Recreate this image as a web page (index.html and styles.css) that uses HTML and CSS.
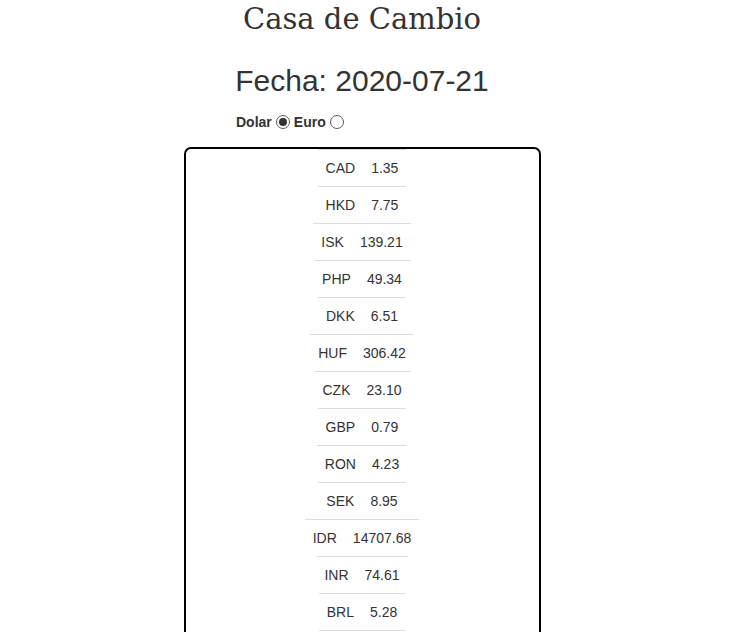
FILE: index.html
```html
<!DOCTYPE html>
<html lang="es">
<head>
<meta charset="utf-8">
<title>Casa de Cambio</title>
<link rel="stylesheet" href="styles.css">
</head>
<body>
<div class="page">
  <h1 class="title">Casa de Cambio</h1>
  <h2 class="date">Fecha: 2020-07-21</h2>
  <form class="base">
    <label class="opt">Dolar<input type="radio" name="base" class="radio" checked></label>
    <label class="opt">Euro<input type="radio" name="base" class="radio"></label>
  </form>
  <div class="box">
    <table class="rate"><tr><td>CAD</td><td>1.35</td></tr></table>
    <table class="rate"><tr><td>HKD</td><td>7.75</td></tr></table>
    <table class="rate"><tr><td>ISK</td><td>139.21</td></tr></table>
    <table class="rate"><tr><td>PHP</td><td>49.34</td></tr></table>
    <table class="rate"><tr><td>DKK</td><td>6.51</td></tr></table>
    <table class="rate"><tr><td>HUF</td><td>306.42</td></tr></table>
    <table class="rate"><tr><td>CZK</td><td>23.10</td></tr></table>
    <table class="rate"><tr><td>GBP</td><td>0.79</td></tr></table>
    <table class="rate"><tr><td>RON</td><td>4.23</td></tr></table>
    <table class="rate"><tr><td>SEK</td><td>8.95</td></tr></table>
    <table class="rate"><tr><td>IDR</td><td>14707.68</td></tr></table>
    <table class="rate"><tr><td>INR</td><td>74.61</td></tr></table>
    <table class="rate last"><tr><td>BRL</td><td>5.28</td></tr></table>
  </div>
</div>
</body>
</html>
```
FILE: styles.css
```css
html, body {
  margin: 0;
  padding: 0;
  background: #fff;
  overflow: hidden;
}
body {
  font-family: "Liberation Sans", Arial, sans-serif;
  color: #333;
  font-size: 14px;
}
.page {
  width: 724px;
}
.title {
  font-family: "DejaVu Serif", serif;
  font-weight: normal;
  font-size: 29px;
  line-height: 32px;
  margin: 3px 0 0;
  text-align: center;
  color: #333;
}
.date {
  font-weight: normal;
  font-size: 30px;
  line-height: 33px;
  margin: 29px 0 0;
  text-align: center;
  color: #333;
}
.base {
  display: flex;
  align-items: center;
  height: 20px;
  margin: 15px 0 0 236px;
  gap: 4px;
}
.opt {
  display: flex;
  align-items: center;
  font-weight: bold;
  font-size: 14px;
  line-height: 20px;
  color: #333;
}
.radio {
  appearance: none;
  -webkit-appearance: none;
  width: 14px;
  height: 14px;
  margin: 0 0 0 4px;
  border: 1px solid #5a5a5a;
  border-radius: 50%;
  background: #fff;
  box-sizing: border-box;
  display: grid;
  place-items: center;
}
.radio:checked::after {
  content: "";
  width: 8px;
  height: 8px;
  border-radius: 50%;
  background: #333;
}
.box {
  width: 357px;
  box-sizing: border-box;
  margin: 15px auto 0;
  border: 2px solid #000;
  border-radius: 7px;
  padding: 0 0 40px;
}
.rate {
  border-collapse: collapse;
  margin: 0 auto;
}
.rate td {
  border-top: 1px solid #ddd;
  padding: 8px;
  line-height: 20px;
  font-size: 14px;
  color: #333;
}
.rate.last td {
  border-bottom: 1px solid #ddd;
}
```
